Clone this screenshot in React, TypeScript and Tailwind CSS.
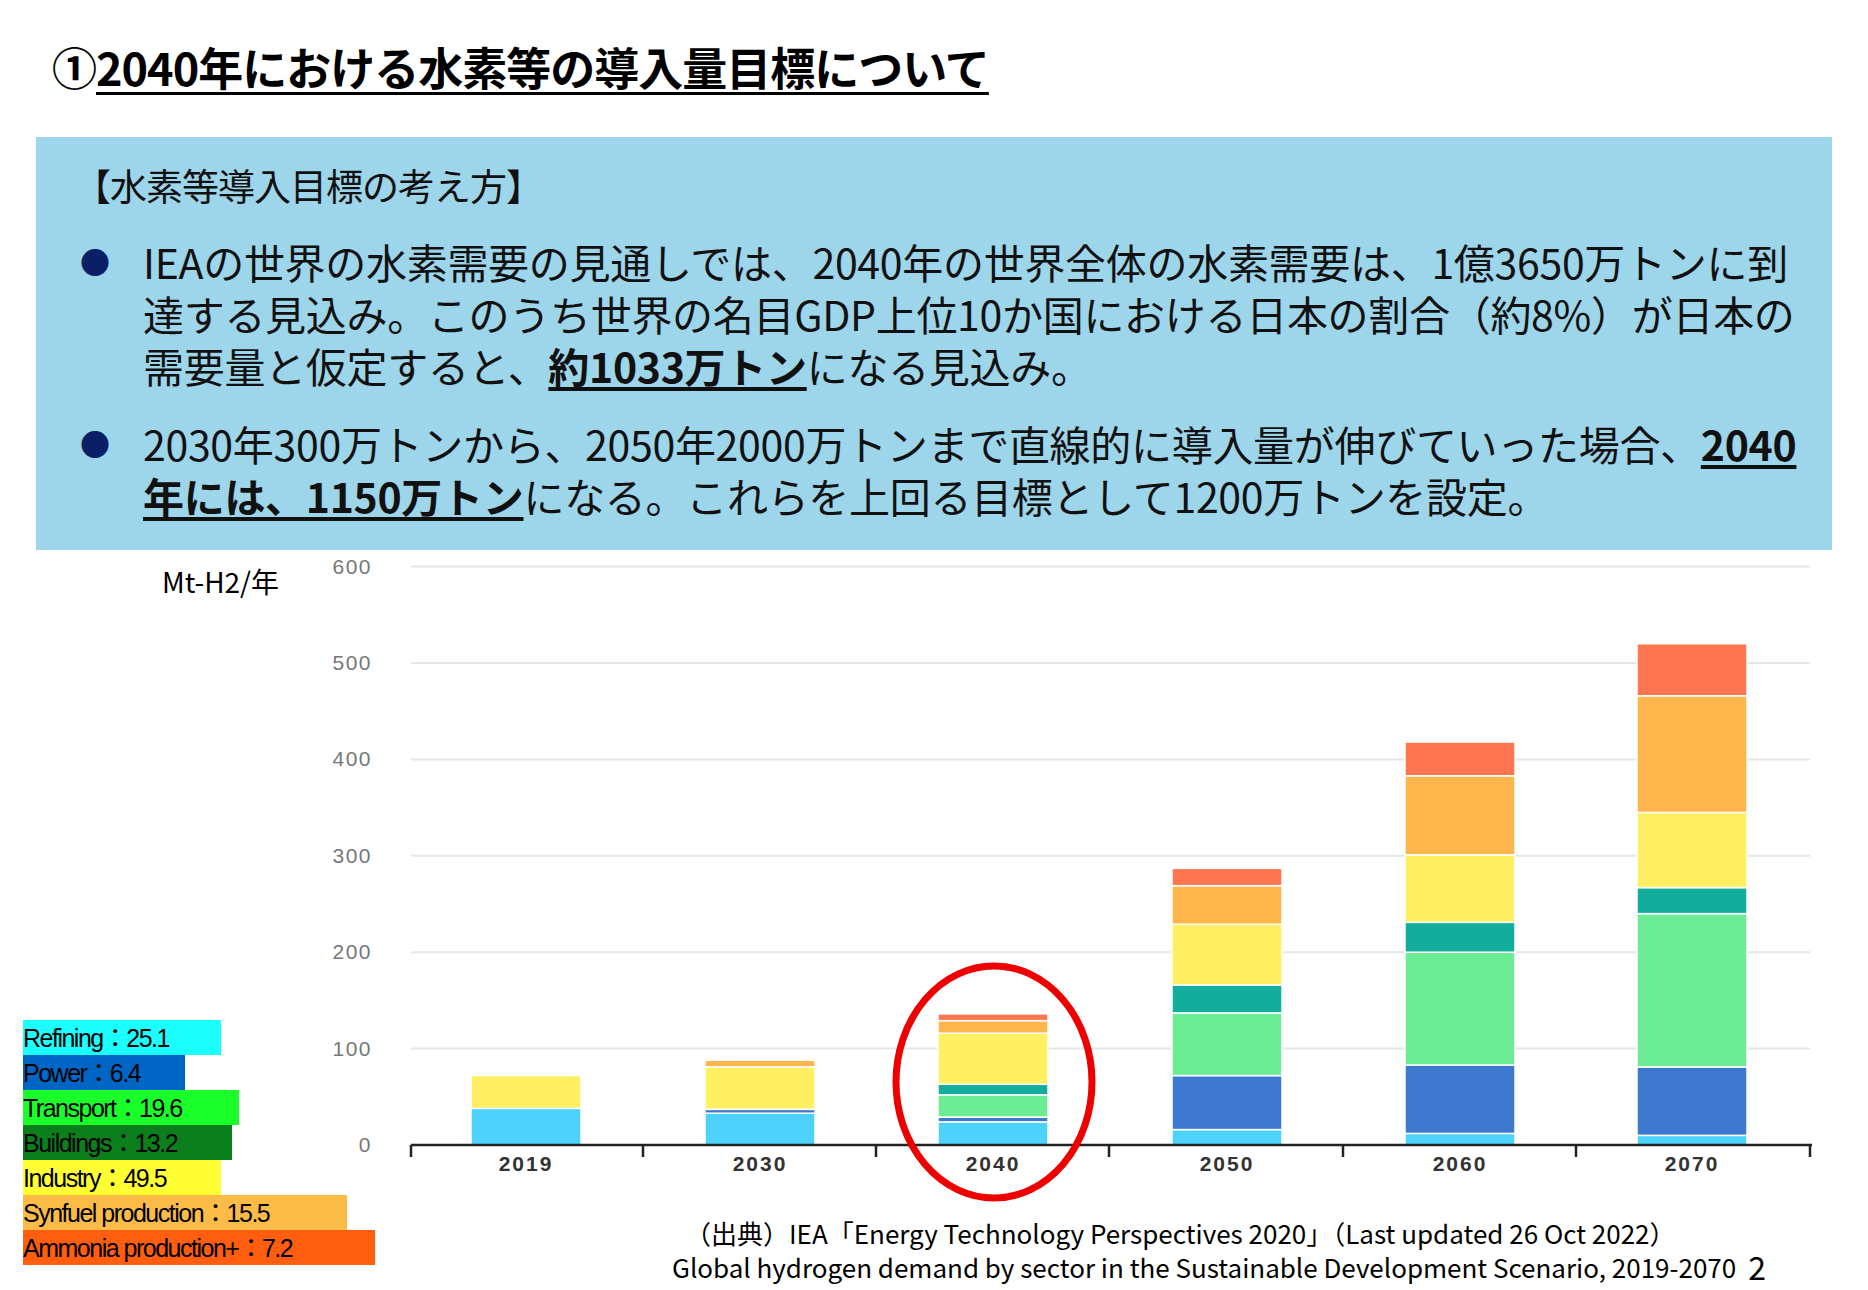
import React from "react";

const C = { cyan: "#4dd2fb", blue: "#3e78d0", green: "#6ced95", teal: "#13ad9e", yellow: "#fff063", orange: "#feb54c", red: "#fe7650" };
const order = ["cyan", "blue", "green", "teal", "yellow", "orange", "red"] as const;
const bars: { year: string; x: number; v: number[] }[] = [
  { year: "2019", x: 526, v: [38, 0, 0, 0, 72, 72, 72] },
  { year: "2030", x: 760, v: [33, 37, 37, 37, 81, 88, 88] },
  { year: "2040", x: 993, v: [24, 29, 52, 63, 116, 129, 136] },
  { year: "2050", x: 1227, v: [16, 72, 137, 166, 229, 269, 287] },
  { year: "2060", x: 1460, v: [12, 83, 200, 231, 301, 383, 418] },
  { year: "2070", x: 1692, v: [10, 81, 240, 267, 345, 466, 520] },
];
const y0 = 1145;
const k = 0.964;
const Y = (v: number) => y0 - v * k;

const legend = [
  { t: "Refining：25.1", c: "#1cffff", w: 198 },
  { t: "Power：6.4", c: "#0066c6", w: 162 },
  { t: "Transport：19.6", c: "#1aff2a", w: 216 },
  { t: "Buildings：13.2", c: "#0a7f1c", w: 209 },
  { t: "Industry：49.5", c: "#ffff33", w: 198 },
  { t: "Synfuel production：15.5", c: "#fbbb47", w: 324 },
  { t: "Ammonia production+：7.2", c: "#ff5e0e", w: 352 },
];

export default function App() {
  const jp = { fontFamily: '"Noto Sans CJK JP", "Noto Sans", sans-serif' };
  return (
    <div className="w-[1868px] h-[1290px] bg-white flex flex-col overflow-hidden" style={jp}>
      <div className="h-[137px] pl-[52px] pt-[44px]">
        <span className="text-[45px] font-bold leading-none text-black tracking-[-1px]">①<span className="underline underline-offset-[6px] decoration-[3px]">2040年における水素等の導入量目標について</span></span>
      </div>
      <div className="mx-[36px] h-[413px] bg-[#9dd5ea] text-[#111] pt-[22px]">
        <div className="pl-[38px] text-[37px] leading-[52px] tracking-[-1px]">【水素等導入目標の考え方】</div>
        <div className="mt-[24px] flex">
          <div className="w-[107px] pl-[44px] text-[30px] leading-[52px] text-[#0a1f66]">●</div>
          <div className="text-[41px] leading-[52px] whitespace-nowrap tracking-[-0.3px]">
            IEAの世界の水素需要の見通しでは、2040年の世界全体の水素需要は、1億3650万トンに到<br />
            達する見込み。このうち世界の名目GDP上位10か国における日本の割合（約8%）が日本の<br />
            需要量と仮定すると、<b className="underline underline-offset-4">約1033万トン</b>になる見込み。
          </div>
        </div>
        <div className="mt-[26px] flex">
          <div className="w-[107px] pl-[44px] text-[30px] leading-[52px] text-[#0a1f66]">●</div>
          <div className="text-[41px] leading-[52px] whitespace-nowrap tracking-[-0.3px]">
            2030年300万トンから、2050年2000万トンまで直線的に導入量が伸びていった場合、<b className="underline underline-offset-4">2040</b><br />
            <b className="underline underline-offset-4">年には、1150万トン</b>になる。これらを上回る目標として1200万トンを設定。
          </div>
        </div>
      </div>
      <div className="flex flex-1">
        <div className="w-[300px] flex flex-col justify-between pb-[25px] relative z-10">
          <div className="pl-[162px] pt-[10px] text-[28px] text-black whitespace-nowrap">Mt-H2/年</div>
          <div className="flex flex-col pl-[23px]" style={{ fontFamily: '"Liberation Sans", "Noto Sans CJK JP", sans-serif' }}>
            {legend.map((l) => (
              <div key={l.t} className="h-[35px] text-[25px] leading-[37px] text-black tracking-[-1.5px] whitespace-nowrap" style={{ background: l.c, width: l.w }}>
                {l.t}
              </div>
            ))}
          </div>
        </div>
        <div className="flex-1 flex flex-col">
          <svg width="1568" height="655" className="block">
            <g transform="translate(-300,-550)">
              {[100, 200, 300, 400, 500, 600].map((v) => (
                <line key={v} x1="411" x2="1810" y1={Y(v)} y2={Y(v)} stroke="#e6e6e6" strokeWidth="2" />
              ))}
              {[0, 100, 200, 300, 400, 500, 600].map((v) => (
                <text key={v} x="372" y={Y(v) + 7} textAnchor="end" fontSize="21" fill="#777" fontFamily="Liberation Sans, sans-serif" letterSpacing="1.5">{v}</text>
              ))}
              {bars.map((b) => {
                let prev = 0;
                return (
                  <g key={b.year}>
                    {b.v.map((top, i) => {
                      const r = top > prev ? (
                        <rect key={i} x={b.x - 55} width="110" y={Y(top)} height={Y(prev) - Y(top)} fill={C[order[i]]} stroke="#fff" strokeWidth="1.5" />
                      ) : null;
                      prev = Math.max(prev, top);
                      return r;
                    })}
                    <text x={b.x} y="1171" textAnchor="middle" fontSize="21" fontWeight="bold" fill="#333" fontFamily="Liberation Sans, sans-serif" letterSpacing="2">{b.year}</text>
                  </g>
                );
              })}
              <line x1="411" x2="1812" y1={y0} y2={y0} stroke="#222" strokeWidth="2.5" />
              {[411, 643, 876, 1109, 1343, 1576, 1810].map((x) => (
                <line key={x} x1={x} x2={x} y1={y0} y2={y0 + 12} stroke="#222" strokeWidth="2.5" />
              ))}
              <ellipse cx="994" cy="1082" rx="98" ry="116" fill="none" stroke="#ee0000" strokeWidth="7" />
            </g>
          </svg>
          <div className="text-[26px] leading-[32px] text-black whitespace-nowrap flex flex-col mt-[12px]">
            <div className="pl-[385px]">（出典）IEA「Energy Technology Perspectives 2020」（Last updated 26 Oct 2022）</div>
            <div className="flex items-end">
              <span className="pl-[372px]">Global hydrogen demand by sector in the Sustainable Development Scenario, 2019-2070</span>
              <span className="ml-[12px] text-[32px] leading-[34px]">2</span>
            </div>
          </div>
        </div>
      </div>
    </div>
  );
}
